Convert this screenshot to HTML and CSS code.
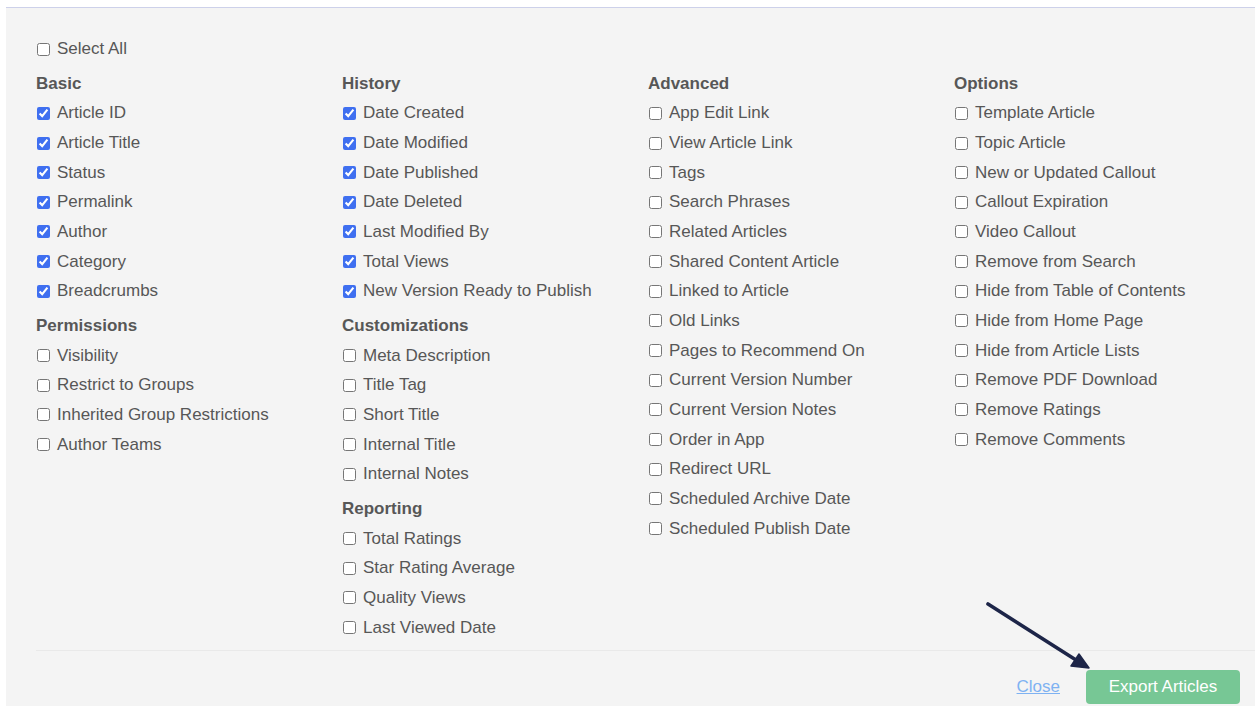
FILE: index.html
```html
<!DOCTYPE html>
<html lang="en">
<head>
<meta charset="utf-8">
<title>Export Articles</title>
<link rel="stylesheet" href="styles.css">
</head>
<body>
<div class="panel">
  <label class="item"><input type="checkbox"> Select All</label>
  <div class="columns">
    <div class="col">
      <div class="group">
        <div class="group-title">Basic</div>
        <label class="item"><input type="checkbox" checked> Article ID</label>
        <label class="item"><input type="checkbox" checked> Article Title</label>
        <label class="item"><input type="checkbox" checked> Status</label>
        <label class="item"><input type="checkbox" checked> Permalink</label>
        <label class="item"><input type="checkbox" checked> Author</label>
        <label class="item"><input type="checkbox" checked> Category</label>
        <label class="item"><input type="checkbox" checked> Breadcrumbs</label>
      </div>
      <div class="group">
        <div class="group-title">Permissions</div>
        <label class="item"><input type="checkbox"> Visibility</label>
        <label class="item"><input type="checkbox"> Restrict to Groups</label>
        <label class="item"><input type="checkbox"> Inherited Group Restrictions</label>
        <label class="item"><input type="checkbox"> Author Teams</label>
      </div>
    </div>
    <div class="col">
      <div class="group">
        <div class="group-title">History</div>
        <label class="item"><input type="checkbox" checked> Date Created</label>
        <label class="item"><input type="checkbox" checked> Date Modified</label>
        <label class="item"><input type="checkbox" checked> Date Published</label>
        <label class="item"><input type="checkbox" checked> Date Deleted</label>
        <label class="item"><input type="checkbox" checked> Last Modified By</label>
        <label class="item"><input type="checkbox" checked> Total Views</label>
        <label class="item"><input type="checkbox" checked> New Version Ready to Publish</label>
      </div>
      <div class="group">
        <div class="group-title">Customizations</div>
        <label class="item"><input type="checkbox"> Meta Description</label>
        <label class="item"><input type="checkbox"> Title Tag</label>
        <label class="item"><input type="checkbox"> Short Title</label>
        <label class="item"><input type="checkbox"> Internal Title</label>
        <label class="item"><input type="checkbox"> Internal Notes</label>
      </div>
      <div class="group">
        <div class="group-title">Reporting</div>
        <label class="item"><input type="checkbox"> Total Ratings</label>
        <label class="item"><input type="checkbox"> Star Rating Average</label>
        <label class="item"><input type="checkbox"> Quality Views</label>
        <label class="item"><input type="checkbox"> Last Viewed Date</label>
      </div>
    </div>
    <div class="col">
      <div class="group">
        <div class="group-title">Advanced</div>
        <label class="item"><input type="checkbox"> App Edit Link</label>
        <label class="item"><input type="checkbox"> View Article Link</label>
        <label class="item"><input type="checkbox"> Tags</label>
        <label class="item"><input type="checkbox"> Search Phrases</label>
        <label class="item"><input type="checkbox"> Related Articles</label>
        <label class="item"><input type="checkbox"> Shared Content Article</label>
        <label class="item"><input type="checkbox"> Linked to Article</label>
        <label class="item"><input type="checkbox"> Old Links</label>
        <label class="item"><input type="checkbox"> Pages to Recommend On</label>
        <label class="item"><input type="checkbox"> Current Version Number</label>
        <label class="item"><input type="checkbox"> Current Version Notes</label>
        <label class="item"><input type="checkbox"> Order in App</label>
        <label class="item"><input type="checkbox"> Redirect URL</label>
        <label class="item"><input type="checkbox"> Scheduled Archive Date</label>
        <label class="item"><input type="checkbox"> Scheduled Publish Date</label>
      </div>
    </div>
    <div class="col">
      <div class="group">
        <div class="group-title">Options</div>
        <label class="item"><input type="checkbox"> Template Article</label>
        <label class="item"><input type="checkbox"> Topic Article</label>
        <label class="item"><input type="checkbox"> New or Updated Callout</label>
        <label class="item"><input type="checkbox"> Callout Expiration</label>
        <label class="item"><input type="checkbox"> Video Callout</label>
        <label class="item"><input type="checkbox"> Remove from Search</label>
        <label class="item"><input type="checkbox"> Hide from Table of Contents</label>
        <label class="item"><input type="checkbox"> Hide from Home Page</label>
        <label class="item"><input type="checkbox"> Hide from Article Lists</label>
        <label class="item"><input type="checkbox"> Remove PDF Download</label>
        <label class="item"><input type="checkbox"> Remove Ratings</label>
        <label class="item"><input type="checkbox"> Remove Comments</label>
      </div>
    </div>
  </div>
  <div class="footer">
    <a class="close-link" href="#">Close</a>
    <button class="btn-export" type="button">Export Articles</button>
  </div>
</div>
<!-- pointer arrow drawn over the dialog toward the export button -->
<svg class="pointer" width="1255" height="706" viewBox="0 0 1255 706">
  <line x1="988" y1="604" x2="1076" y2="660" stroke="#1d2548" stroke-width="3.6" stroke-linecap="round"/>
  <polygon points="1089,668 1071,666 1079,654" fill="#1d2548" stroke="#1d2548" stroke-width="1.5" stroke-linejoin="round"/>
</svg>
</body>
</html>
```
FILE: styles.css
```css
html, body {
  margin: 0;
  padding: 0;
  background: #ffffff;
  overflow: hidden;
  height: 706px;
}

body {
  font-family: "Liberation Sans", Arial, sans-serif;
  font-size: 17px;
  color: #575757;
}

.panel {
  margin: 7px 0 0 6px;
  border-top: 1px solid #cdd1ea;
  background: #f4f4f4;
  padding: 26.2px 0 0 30px;
  width: 1300px;
  height: 700px;
  box-sizing: border-box;
}

.columns {
  display: grid;
  grid-template-columns: repeat(4, 306px);
}

.group {
  margin-top: 5px;
}

.group-title {
  font-weight: bold;
  height: 29.7px;
  line-height: 29.7px;
}

.item {
  display: flex;
  align-items: center;
  height: 29.66px;
  white-space: nowrap;
}

.item input {
  width: 13px;
  height: 13px;
  margin: 0 7px 0 1px;
  accent-color: #3f6ff0;
}

.footer {
  margin-top: 8px;
  border-top: 1px solid #e9e9e9;
  width: 1219px;
  box-sizing: border-box;
  padding: 19px 15px 0 0;
  display: flex;
  justify-content: flex-end;
  align-items: center;
  gap: 26px;
}

.close-link {
  color: #7eb2f2;
  text-decoration: underline;
}

.btn-export {
  font-family: inherit;
  font-size: 17px;
  color: #ffffff;
  background: #77c795;
  border: none;
  border-radius: 4px;
  height: 34px;
  width: 154px;
  padding: 0;
}

.pointer {
  position: absolute;
  left: 0;
  top: 0;
  pointer-events: none;
}
```
